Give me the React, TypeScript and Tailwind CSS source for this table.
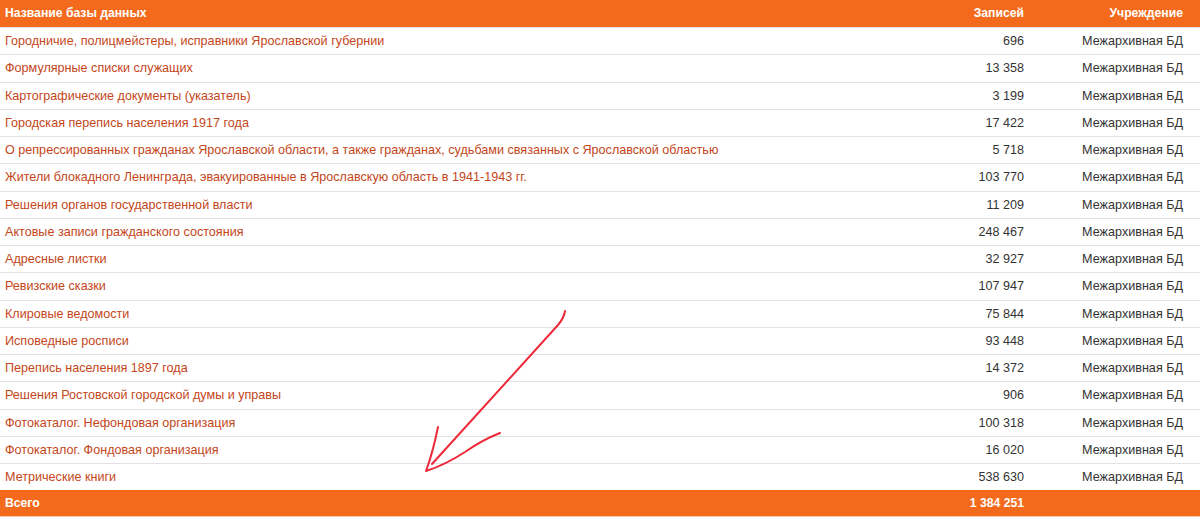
const rows: [string, string][] = [
  ['Городничие, полицмейстеры, исправники Ярославской губернии', '696'],
  ['Формулярные списки служащих', '13 358'],
  ['Картографические документы (указатель)', '3 199'],
  ['Городская перепись населения 1917 года', '17 422'],
  ['О репрессированных гражданах Ярославской области, а также гражданах, судьбами связанных с Ярославской областью', '5 718'],
  ['Жители блокадного Ленинграда, эвакуированные в Ярославскую область в 1941-1943 гг.', '103 770'],
  ['Решения органов государственной власти', '11 209'],
  ['Актовые записи гражданского состояния', '248 467'],
  ['Адресные листки', '32 927'],
  ['Ревизские сказки', '107 947'],
  ['Клировые ведомости', '75 844'],
  ['Исповедные росписи', '93 448'],
  ['Перепись населения 1897 года', '14 372'],
  ['Решения Ростовской городской думы и управы', '906'],
  ['Фотокаталог. Нефондовая организация', '100 318'],
  ['Фотокаталог. Фондовая организация', '16 020'],
  ['Метрические книги', '538 630'],
];

export default function App() {
  return (
    <div className="relative h-[523px] w-[1200px] overflow-hidden bg-white font-['Liberation_Sans',Arial,sans-serif] text-[12.6px]">
      <div className="flex h-[27px] items-center bg-[#f46a1c] text-[12.2px] font-bold text-white">
        <div className="flex-1 pl-[5px]">Название базы данных</div>
        <div className="w-[200px] text-right">Записей</div>
        <div className="w-[176px] pr-[17px] text-right">Учреждение</div>
      </div>
      {rows.map(([name, count]) => (
        <div key={name} className="flex h-[27.25px] items-center border-t border-[#e2e2e2] pt-[1px]">
          <div className="flex-1 pl-[5px] text-[#c4461a]">{name}</div>
          <div className="w-[200px] text-right text-[#333]">{count}</div>
          <div className="w-[176px] pr-[17px] text-right text-[#333]">Межархивная БД</div>
        </div>
      ))}
      <div className="flex h-[27px] items-center border-b border-b-[#f9c8a8] bg-[#f46a1c] text-[12.2px] font-bold text-white">
        <div className="flex-1 pl-[5px]">Всего</div>
        <div className="w-[200px] text-right">1 384 251</div>
        <div className="w-[176px] pr-[17px]" />
      </div>
      <svg className="pointer-events-none absolute left-0 top-0" width="1200" height="523" fill="none" stroke="#ec2a3a" strokeWidth="2" strokeLinecap="round" strokeLinejoin="round">
        <path d="M565 311 Q564 318 558 325 L432 464" />
        <path d="M438 427 Q433 452 426 471 Q445 465 465 452 Q482 440 500 433" />
      </svg>
    </div>
  );
}
